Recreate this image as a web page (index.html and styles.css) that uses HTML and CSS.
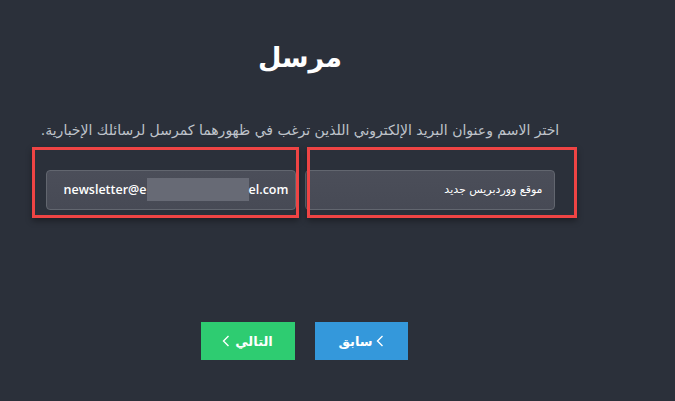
FILE: index.html
```html
<!DOCTYPE html>
<html lang="ar" dir="rtl">
<head>
<meta charset="utf-8">
<title>مرسل</title>
<link rel="stylesheet" href="styles.css">
</head>
<body>
<div class="wizard">
  <h1 class="title">مرسل</h1>
  <p class="desc">اختر الاسم وعنوان البريد الإلكتروني اللذين ترغب في ظهورهما كمرسل لرسائلك الإخبارية.</p>
  <div class="fields">
    <div class="field field-name">
      <div class="input input-name">موقع ووردبريس جديد</div>
      <span class="mark mark-name"></span>
    </div>
    <div class="field field-email">
      <div class="input input-email" dir="ltr">newsletter@e<span class="blur"></span>el.com</div>
      <span class="mark mark-email"></span>
    </div>
  </div>
  <div class="actions">
    <button class="btn btn-prev"><svg class="chev" width="8" height="12" viewBox="0 0 8 12"><path d="M6.5 1 L1.5 6 L6.5 11" fill="none" stroke="#fff" stroke-width="1.4"/></svg>سابق</button>
    <button class="btn btn-next">التالي<svg class="chev" width="8" height="12" viewBox="0 0 8 12"><path d="M6.5 1 L1.5 6 L6.5 11" fill="none" stroke="#fff" stroke-width="1.4"/></svg></button>
  </div>
</div>
</body>
</html>
```

FILE: styles.css
```css
html, body {
  margin: 0;
  padding: 0;
  background: #2b303a;
  height: 100%;
}
body {
  font-family: "DejaVu Sans", "Liberation Sans", sans-serif;
  color: #fff;
}
.wizard {
  width: 530px;
  margin-right: 110px;
  margin-left: auto;
  padding-top: 38px;
  text-align: center;
}
.title {
  margin: 0;
  font-size: 27px;
  line-height: 40px;
  font-weight: bold;
  color: #ffffff;
}
.desc {
  margin: 43px 0 0;
  font-size: 14px;
  line-height: 18px;
  color: #bfc3ca;
}
.fields {
  display: grid;
  grid-template-columns: 250px 250px;
  column-gap: 9px;
  justify-content: center;
  margin-top: 31px;
}
.field {
  position: relative;
}
.input {
  box-sizing: border-box;
  height: 40px;
  border: 1px solid #62666f;
  border-radius: 4px;
  background: linear-gradient(#4b4e59, #474a55);
  font-size: 13px;
  line-height: 38px;
  color: #fff;
  white-space: nowrap;
  overflow: hidden;
}
.input-name {
  text-align: right;
  padding-right: 11px;
  font-size: 11px;
}
.input-email {
  text-align: left;
  padding-left: 17px;
  font-family: "Open Sans", "Liberation Sans", sans-serif;
  font-weight: 600;
  font-size: 12.5px;
}
.blur {
  display: inline-block;
  width: 102px;
  height: 23px;
  vertical-align: middle;
  margin-top: -2px;
  background: #676a75;
}
.mark {
  position: absolute;
  border: 3px solid #ef4444;
  box-shadow: 0 3px 6px rgba(0, 0, 0, 0.35);
  pointer-events: none;
}
.mark-email {
  top: -23px;
  bottom: -8px;
  left: -14px;
  right: -3px;
}
.mark-name {
  top: -23px;
  bottom: -8px;
  left: 2px;
  right: -22px;
}
.actions {
  display: flex;
  justify-content: center;
  gap: 20px;
  margin-top: 112px;
  padding-left: 8px;
}
.btn {
  box-sizing: border-box;
  height: 38px;
  border: 0;
  border-radius: 0;
  color: #fff;
  font-family: "DejaVu Sans", "Liberation Sans", sans-serif;
  font-size: 13px;
  font-weight: bold;
  display: flex;
  align-items: center;
  justify-content: center;
  gap: 3px;
  padding: 0;
}
.btn-prev {
  width: 93px;
  background: #3498db;
}
.btn-next {
  width: 94px;
  background: #2ecc71;
  gap: 5px;
}
.chev {
  display: block;
}
```
